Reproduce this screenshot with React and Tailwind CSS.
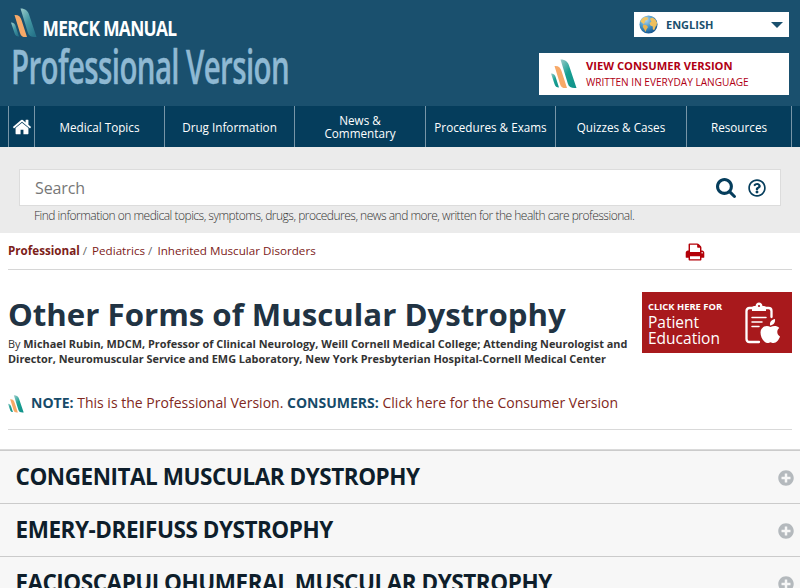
import React, { useId, useState } from "react";
import { FaPlusCircle, FaRegQuestionCircle } from "react-icons/fa";

const navItems = [
  { label: "Medical Topics", width: "w-[130px]" },
  { label: "Drug Information", width: "w-[130px]" },
  { label: "News &\nCommentary", width: "w-[131px]" },
  { label: "Procedures & Exams", width: "w-[130px]" },
  { label: "Quizzes & Cases", width: "w-[131px]" },
  { label: "Resources", width: "w-[105px]" },
];

const sections = [
  "Congenital Muscular Dystrophy",
  "Emery-Dreifuss Dystrophy",
  "Facioscapulohumeral Muscular Dystrophy",
];

function BrandMark({ className, teal = "#18a093", stem = "#12938a" }) {
  const id = useId();
  return (
    <svg viewBox="0 0 26 30" preserveAspectRatio="none" className={className}>
      <defs>
        <linearGradient id={id} x1="0" y1="0" x2="0.8" y2="1">
          <stop offset="0" stopColor="#9bcbc9" />
          <stop offset="0.5" stopColor={teal} />
          <stop offset="1" stopColor={stem} />
        </linearGradient>
      </defs>
      <path d="M0 14.5C2.500 14.500 4.200 16 4.800 18.500L8 28.500C5.500 28.500 4.200 27.500 3.500 25Z" fill={`url(#${id})`} />
      <path d="M3.500 7C7.500 6.700 9.500 8.500 10.500 12L16 29C12.500 29.500 10 28.500 9 25Z" fill="#f7a968" />
      <path d="M9.500 0.500C14.500 0.500 17 3 18.200 7L25.500 29C21 29.500 18 28.500 16.800 24.500Z" fill={`url(#${id})`} />
    </svg>
  );
}

function Globe() {
  return (
    <svg viewBox="0 0 20 20" className="h-[19px] w-[19px]">
      <defs>
        <radialGradient id="ocean" cx="0.35" cy="0.25" r="0.8">
          <stop offset="0" stopColor="#b5d8ee" />
          <stop offset="0.5" stopColor="#4797c9" />
          <stop offset="1" stopColor="#12518a" />
        </radialGradient>
      </defs>
      <circle cx="10" cy="10" r="9.500" fill="url(#ocean)" />
      <path d="M1.500 7L3 4L6 2L9.500 2.500L9 5L6.500 6L6 8.500L4.500 9.500L3 8Z" fill="#efc565" />
      <path d="M4.500 10L7.500 10.500L9.500 12.500L8 15L6.800 18L5.500 15L4 12.500Z" fill="#e9b350" />
      <path d="M11.500 4L14 2.500L17 4.500L19 8L18.500 11L17.500 12L16 16L14.500 15L14.500 12L12 11L11 8.500L13 7Z" fill="#efc05d" />
    </svg>
  );
}

function HomeIcon() {
  return (
    <svg viewBox="0 0 1792 1792" className="h-5 w-5 shrink-0 fill-white">
      <path d="M1472 992v480q0 26-19 45t-45 19h-384v-384h-256v384h-384q-26 0-45-19t-19-45v-480q0-1 .5-3t.5-3l575-474 575 474q1 2 1 6zm223-69l-62 74q-8 9-21 11h-3q-13 0-21-7l-692-577-692 577q-12 8-24 7-13-2-21-11l-62-74q-8-10-7-23.500t11-21.500l719-599q32-26 76-26t76 26l244 204v-195q0-14 9-23t23-9h192q14 0 23 9t9 23v408l219 182q10 8 11 21.500t-7 23.500z" />
    </svg>
  );
}

function SearchIcon() {
  return (
    <svg viewBox="64 128 1664 1664" className="mt-px h-[20px] w-[20px] fill-[#053d5c]">
      <path d="M1216 832q0-185-131.500-316.500t-316.500-131.500-316.500 131.500-131.500 316.500 131.500 316.500 316.500 131.500 316.500-131.500 131.500-316.500zm512 832q0 52-38 90t-90 38q-54 0-90-38l-343-342q-179 124-399 124-143 0-273.500-55.500t-225-150-150-225-55.500-273.500 55.500-273.500 150-225 225-150 273.500-55.500 273.500 55.500 225 150 150 225 55.500 273.500q0 220-124 399l343 343q37 37 37 90z" />
    </svg>
  );
}

function PrintIcon() {
  return (
    <svg viewBox="0 0 1792 1792" className="mt-0.5 h-5 w-5 fill-[#b30008]">
      <path d="M448 1536h896v-256h-896v256zm0-640h896v-384h-160q-40 0-68-28t-28-68v-160h-640v640zm1152 64q0-26-19-45t-45-19-45 19-19 45 19 45 45 19 45-19 19-45zm128 0v416q0 13-9.500 22.500t-22.500 9.500h-224v160q0 40-28 68t-68 28h-960q-40 0-68-28t-28-68v-160h-224q-13 0-22.500-9.500t-9.500-22.500v-416q0-79 56.500-135.500t135.500-56.500h64v-544q0-40 28-68t68-28h672q40 0 88 20t76 48l152 152q28 28 48 76t20 88v256h64q79 0 135.500 56.500t56.500 135.500z" />
    </svg>
  );
}

function ClipboardApple() {
  return (
    <svg viewBox="0 0 36 42" className="h-[42px] w-9" fill="none">
      <path d="M7 6H4.500Q1.500 6 1.500 9V37Q1.500 40 4.500 40H14M20 6H23.500Q26.500 6 26.500 9V15" stroke="white" strokeWidth="2.300" strokeLinecap="round" />
      <path d="M7 9V5.500Q7 4 9 4H10.500Q11 0.500 14 0.500T17.500 4H19Q21 4 21 5.500V9Z" fill="white" />
      <circle cx="14" cy="4" r="1.100" fill="#a8191c" />
      <path d="M7 15.500H21M7 20H17M7 24.500H14" stroke="white" strokeWidth="1.500" strokeLinecap="round" />
      <path d="M25.500 25C21 22.500 15.500 25 15.500 30.500C15.500 36 19.500 41 22.500 41C24 41 24.500 40.200 25.500 40.200S27 41 28.500 41C31.500 41 34 37.500 35 34.500C31.500 32.500 31.500 28 34.300 26C32 23.500 28.500 23.500 25.500 25Z" fill="white" />
      <path d="M25 23.500C24.500 19.500 27 17.500 30 17C30.500 20.500 28.500 23 25 23.500Z" fill="white" />
    </svg>
  );
}

export default function App() {
  const [query, setQuery] = useState("");

  return (
    <div className="h-[588px] w-[800px] overflow-hidden bg-white font-['Open_Sans',sans-serif] text-[#333]">
      <header className="flex h-[106px] justify-between bg-[#1a506e] pr-[11px] pl-[11px]">
        <div className="flex flex-col pt-2">
          <div className="flex h-[31px]">
            <BrandMark className="h-[30px] w-[26px]" teal="#4498a4" stem="#257389" />
            <svg width="150" height="31" className="ml-[5px] overflow-visible">
              <text x="0.500" y="27.500" textLength="134" lengthAdjust="spacingAndGlyphs" className="fill-white font-['Open_Sans'] text-[20.500px] font-bold tracking-[-0.8px]">
                MERCK MANUAL
              </text>
            </svg>
          </div>
          <svg width="290" height="56" className="overflow-visible">
            <text x="0" y="44.500" textLength="278" lengthAdjust="spacingAndGlyphs" strokeWidth="0.4" className="fill-[#8fb9d3] stroke-[#8fb9d3] font-['Open_Sans'] text-[47px] font-semibold tracking-[-1px]">
              Professional Version
            </text>
          </svg>
        </div>
        <div className="flex flex-col items-end pt-[12px]">
          <button className="flex h-[25px] w-[155px] items-center bg-white pr-1.5 pl-[5px] text-[11px] font-bold text-[#1a506e]">
            <Globe />
            <span className="ml-2 flex-1 pt-px text-left">ENGLISH</span>
            <svg viewBox="0 0 12 6" className="h-1.5 w-3 fill-[#1a506e]">
              <path d="M0 0H12L6 6Z" />
            </svg>
          </button>
          <a className="mt-[16px] flex h-[42px] w-[250px] items-center bg-white pl-3">
            <BrandMark className="h-[30px] w-[26px]" />
            <div className="ml-[9px] text-[#b00014]">
              <div className="text-[11.200px] leading-4 font-bold">VIEW CONSUMER VERSION</div>
              <div className="text-[10.100px] leading-4">WRITTEN IN EVERYDAY LANGUAGE</div>
            </div>
          </a>
        </div>
      </header>

      <nav className="flex h-[41px] bg-[#053d5c] pl-2 text-[11.700px] leading-[13px] text-white">
        <a className="flex w-[27px] items-center justify-center border-x border-[#7795a7]">
          <HomeIcon />
        </a>
        {navItems.map((item) => (
          <a key={item.label} className={`${item.width} flex items-center justify-center border-r border-[#7795a7] pt-px text-center whitespace-pre-line`}>
            {item.label}
          </a>
        ))}
      </nav>

      <section className="h-[86px] bg-[#ebebeb] px-[19px] pt-[22px]">
        <div className="flex h-[37px] items-center border border-[#dcdcdc] bg-white pr-[14px] pl-[15px]">
          <input
            className="min-w-0 flex-1 text-[16px] tracking-[-0.1px] outline-none placeholder:text-[#777]"
            placeholder="Search"
            value={query}
            onChange={(e) => setQuery(e.target.value)}
          />
          <SearchIcon />
          <FaRegQuestionCircle className="ml-[12px] h-[18px] w-[18px] text-[#053d5c]" />
        </div>
        <p className="pt-[2px] pl-[15px] text-[12px] leading-4 font-light tracking-[-0.495px] whitespace-nowrap">
          Find information on medical topics, symptoms, drugs, procedures, news and more, written for the health care professional.
        </p>
      </section>

      <main>
        <div className="mx-2 flex h-[37px] items-center justify-between border-b border-[#d6d6d6] pr-[87px] text-[11.650px] text-[#7c2119]">
          <div className="whitespace-nowrap">
            <b>Professional</b>
            <span className="mr-[5px] ml-[3px] text-[#666]">/</span>
            <a>Pediatrics</a>
            <span className="mr-[5px] ml-[3px] text-[#666]">/</span>
            <a>Inherited Muscular Disorders</a>
          </div>
          <PrintIcon />
        </div>

        <div className="mx-2 flex h-[106px] justify-between pt-[22px]">
          <div>
            <h1 className="pt-px text-[31.200px] leading-[43px] font-bold whitespace-nowrap text-[#213343]">Other Forms of Muscular Dystrophy</h1>
            <p className="text-[10.900px] leading-[15px] font-bold whitespace-nowrap">
              <span className="font-normal">By</span> Michael Rubin, MDCM, Professor of Clinical Neurology, Weill Cornell Medical College; Attending Neurologist and
              <br />
              Director, Neuromuscular Service and EMG Laboratory, New York Presbyterian Hospital-Cornell Medical Center
            </p>
          </div>
          <a className="flex h-[61px] w-[150px] shrink-0 items-center justify-between bg-[#a8191c] pr-[11px] pl-1.5 text-white">
            <div className="pt-px">
              <div className="text-[9.400px] leading-[13px] font-bold">CLICK HERE FOR</div>
              <div className="pt-px text-[15.500px] leading-4">
                Patient
                <br />
                Education
              </div>
            </div>
            <ClipboardApple />
          </a>
        </div>

        <div className="mx-2 flex h-[54px] items-center border-b border-[#d9d9d9] text-[14px] whitespace-nowrap text-[#812821]">
          <BrandMark className="mt-0.5 h-[18px] w-4" />
          <p className="ml-[7px] tracking-[0.01px]">
            <b className="text-[#174b69]">NOTE:</b> This is the Professional Version. <b className="text-[#174b69]">CONSUMERS:</b> Click here for the Consumer Version
          </p>
        </div>

        <div className="mt-[19px] border-t border-[#dadada]">
          {sections.map((title) => (
            <div key={title} className="flex h-[53px] items-center justify-between border-t border-[#cbcbcb] bg-[#f7f7f7] pr-1.5 pl-[15.500px]">
              <h2 className="text-[22.500px] font-bold tracking-[-0.46px] whitespace-nowrap text-[#0e1e2b] uppercase">{title}</h2>
              <FaPlusCircle className="mt-px h-4 w-4 text-[#b4b9bd]" />
            </div>
          ))}
        </div>
      </main>
    </div>
  );
}
